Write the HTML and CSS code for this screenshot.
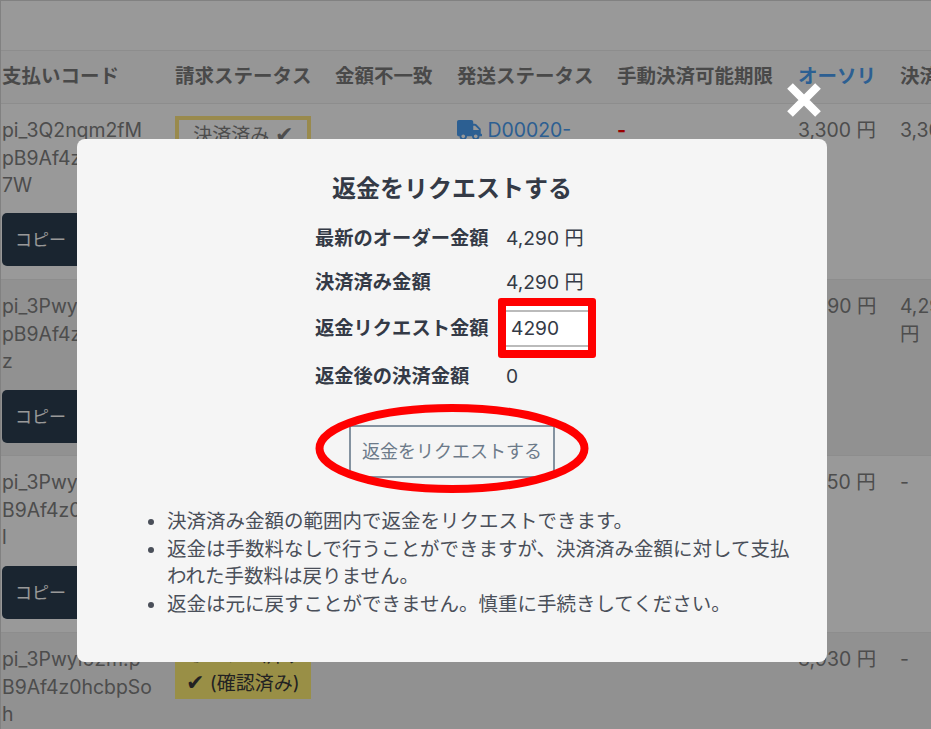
FILE: index.html
```html
<!DOCTYPE html>
<html lang="ja">
<head>
<meta charset="utf-8">
<title>返金をリクエストする</title>
<link rel="stylesheet" href="styles.css">
</head>
<body>
<div class="page">
  <table class="orders">
    <colgroup>
      <col class="c1"><col class="c2"><col class="c3"><col class="c4"><col class="c5"><col class="c6"><col class="c7">
    </colgroup>
    <thead>
      <tr>
        <th>支払いコード</th><th>請求ステータス</th><th>金額不一致</th><th>発送ステータス</th><th>手動決済可能期限</th><th><a class="link" href="#">オーソリ</a></th><th>決済済み</th>
      </tr>
    </thead>
    <tbody>
      <tr>
        <td><div class="code">pi_3Q2nqm2fM<br>pB9Af4z0hcbp<br>7W</div><button class="copy">コピー</button></td>
        <td><div class="badge outline">決済済み <span class="check">✔</span></div></td>
        <td></td>
        <td class="nowrap"><a class="link" href="#"><svg class="truck" viewBox="0 0 640 512" aria-hidden="true"><path d="M624 352h-16V243.9c0-12.7-5.1-24.9-14.1-33.9L494 110.1c-9-9-21.2-14.1-33.9-14.1H416V48c0-26.5-21.5-48-48-48H48C21.5 0 0 21.5 0 48v320c0 26.5 21.5 48 48 48h16c0 53 43 96 96 96s96-43 96-96h128c0 53 43 96 96 96s96-43 96-96h48c8.8 0 16-7.2 16-16v-32c0-8.8-7.2-16-16-16zM160 464c-26.5 0-48-21.5-48-48s21.5-48 48-48 48 21.5 48 48-21.5 48-48 48zm320 0c-26.5 0-48-21.5-48-48s21.5-48 48-48 48 21.5 48 48-21.5 48-48 48zm80-208H416V144h44.1l99.9 99.9V256z"/></svg> D00020-</a></td>
        <td><span class="danger">-</span></td>
        <td class="nowrap">3,300 円</td>
        <td class="nowrap">3,300 円</td>
      </tr>
      <tr>
        <td><div class="code">pi_3Pwyl52m<br>pB9Af4z0hcbp<br>z</div><button class="copy">コピー</button></td>
        <td><div class="badge outline">決済済み <span class="check">✔</span></div></td>
        <td></td><td></td><td></td>
        <td class="nowrap">4,290 円</td>
        <td class="nowrap">4,290<br>円</td>
      </tr>
      <tr>
        <td><div class="code">pi_3Pwyl52m.p<br>B9Af4z0hcbpa<br>l</div><button class="copy">コピー</button></td>
        <td></td><td></td><td></td><td></td>
        <td class="nowrap">3,850 円</td>
        <td>-</td>
      </tr>
      <tr>
        <td><div class="code">pi_3Pwyl52m.p<br>B9Af4z0hcbpSo<br>h</div></td>
        <td><div class="badge solid">オーソリ済み<br><span class="check">✔</span> (確認済み)</div></td>
        <td></td><td></td><td></td>
        <td class="nowrap">3,930 円</td>
        <td>-</td>
      </tr>
    </tbody>
  </table>
</div>

<div class="overlay">
  <div class="modal">
    <svg class="close" viewBox="0 0 34 34" aria-label="閉じる"><path d="M3 3 31 31M31 3 3 31"/></svg>
    <h2 class="title">返金をリクエストする</h2>
    <div class="form">
      <div class="label">最新のオーダー金額</div><div class="value">4,290 円</div>
      <div class="label">決済済み金額</div><div class="value">4,290 円</div>
      <div class="label">返金リクエスト金額</div>
      <div class="value input-cell">
        <div class="input">4290</div>
        <div class="mark-box"></div>
      </div>
      <div class="label">返金後の決済金額</div><div class="value">0</div>
    </div>
    <div class="action">
      <div class="action-inner">
        <button class="submit">返金をリクエストする</button>
        <svg class="mark-ellipse" viewBox="0 0 274 89" aria-hidden="true"><ellipse cx="137" cy="44.5" rx="132.5" ry="40.5"/></svg>
      </div>
    </div>
    <ul class="notes">
      <li>決済済み金額の範囲内で返金をリクエストできます。</li>
      <li>返金は手数料なしで行うことができますが、決済済み金額に対して支払われた手数料は戻りません。</li>
      <li>返金は元に戻すことができません。慎重に手続きしてください。</li>
    </ul>
  </div>
</div>
</body>
</html>
```

FILE: styles.css
```css
* { box-sizing: border-box; }

html, body {
  margin: 0;
  height: 100%;
  overflow: hidden;
}

body {
  background: #fff;
  color: #808080;
  font-family: Inter, "Noto Sans CJK JP", sans-serif;
  font-size: 19.4px;
  line-height: 27.5px;
}

.page {
  height: 729px;
  width: 931px;
  overflow: hidden;
  border-top: 1px solid #d8d8d8;
  border-left: 1px solid #d8d8d8;
  padding-top: 49px;
}

.orders {
  table-layout: fixed;
  border-collapse: collapse;
  width: 965px;
}

.c1 { width: 173px; }
.c2 { width: 160px; }
.c3 { width: 122px; }
.c4 { width: 160px; }
.c5 { width: 181px; }
.c6 { width: 102px; }
.c7 { width: 67px; }

.orders th {
  height: 53px;
  padding: 0 0 0 1px;
  text-align: left;
  font-weight: 700;
  font-size: 19.5px;
  color: #7a7a7a;
  white-space: nowrap;
  border-top: 1px solid #ececec;
  border-bottom: 1px solid #ececec;
  background: #fbfbfb;
}

.orders td {
  height: 176px;
  padding: 13px 0 0 1px;
  vertical-align: top;
  border-bottom: 1px solid #ececec;
}

.orders tbody tr:nth-child(3) td { height: 177px; }

.orders td.nowrap { white-space: nowrap; }

.orders tbody tr:nth-child(even) td { background: #f2f2f2; }

.link, .orders th .link { color: #4a9ef3; text-decoration: none; }

.truck {
  width: 25px;
  height: 20px;
  fill: currentColor;
  vertical-align: -3px;
}

.danger { color: #f00; font-weight: 700; }

.code { height: 82px; white-space: nowrap; overflow: hidden; }

.copy {
  display: block;
  margin-top: 14px;
  width: 150px;
  height: 53px;
  border: 0;
  border-radius: 5px;
  background: #2c3e50;
  color: #fff;
  font-family: inherit;
  font-size: 17px;
  text-align: left;
  padding: 0 0 2px 13px;
}

.orders tbody tr:not(:first-child) .copy { margin-top: 15px; }

.badge {
  width: 136px;
  text-align: center;
  font-size: 19px;
}

.check { font-size: 22px; line-height: 1; }

.badge.outline { border: 4px solid #ffe680; padding: 2px 0; margin-top: -1px; }
.badge.solid { background: #ffef76; color: #3a3a3a; padding: 2px 0; margin-top: -6px; }

.overlay {
  position: fixed;
  inset: 0;
  background: rgba(0, 0, 0, 0.4);
  padding: 139px 0 0 77px;
  display: flex;
  justify-content: flex-start;
  align-items: flex-start;
}

.modal {
  position: relative;
  width: 750px;
  height: 523px;
  padding-top: 34px;
  background: #f5f5f5;
  border-radius: 8px;
  color: #343a46;
}

.close {
  position: absolute;
  top: -56px;
  right: 6px;
  width: 34px;
  height: 34px;
  fill: none;
  stroke: #fff;
  stroke-width: 8;
}

.title {
  margin: 0 0 12px;
  height: 32px;
  text-align: center;
  font-size: 24px;
  line-height: 32px;
  font-weight: 700;
}

.form {
  display: grid;
  grid-template-columns: 191px 83px;
  grid-template-rows: 44px 44px 48px 48px;
  justify-content: center;
  align-items: center;
}

.label { font-weight: 700; font-size: 19.3px; white-space: nowrap; }
.value { font-size: 19.2px; white-space: nowrap; }

.input-cell { position: relative; height: 48px; }

.input {
  position: absolute;
  top: 1px;
  left: 0;
  width: 82px;
  height: 44px;
  background: #fff;
  padding-left: 5px;
  line-height: 44px;
  font-size: 19.2px;
}

.input::before,
.input::after {
  content: "";
  position: absolute;
  left: 0;
  right: 0;
  height: 2px;
  background: #bbb;
}

.input::before { top: 4px; }
.input::after { bottom: 3px; }

.mark-box {
  position: absolute;
  top: -7px;
  left: -8px;
  width: 98px;
  height: 60px;
  border: 8px solid #f00;
  border-radius: 3px;
}

.action {
  margin-top: 24px;
  display: flex;
  justify-content: center;
}

.action-inner { position: relative; }

.submit {
  display: block;
  width: 206px;
  height: 53px;
  background: transparent;
  border: 2px solid #8492a0;
  color: #6c7a89;
  font-family: inherit;
  font-size: 18px;
  padding: 0 0 4px;
}

.mark-ellipse {
  position: absolute;
  top: -21px;
  left: -34px;
  width: 274px;
  height: 89px;
  fill: none;
  stroke: #f00;
  stroke-width: 8;
}

.notes {
  margin: 30px 0 0;
  padding: 0 30px 0 90px;
  font-size: 19.5px;
  line-height: 27.7px;
  color: #4a4f59;
}
```
